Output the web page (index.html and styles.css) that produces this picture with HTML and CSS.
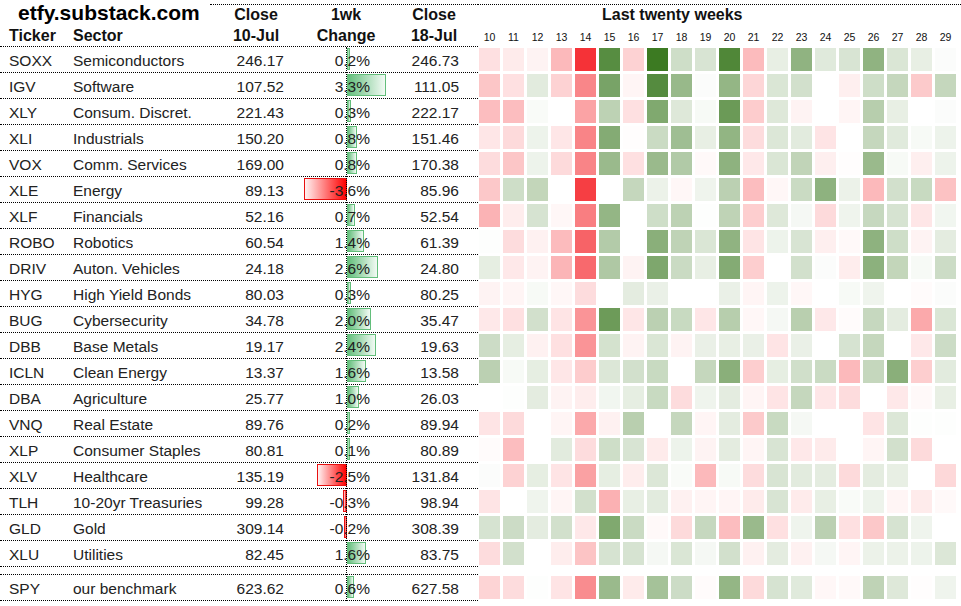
FILE: index.html
```html
<!DOCTYPE html>
<html>
<head>
<meta charset="utf-8">
<title>etfy sector heatmap</title>
<link rel="stylesheet" href="styles.css">
</head>
<body>
<div class="page">
  <div class="left">
    <div class="hdr1">
      <div class="title">etfy.substack.com</div>
      <div class="hdr1-cols">
        <div></div><div class="hc">Close</div><div class="hc">1wk</div><div class="hc">Close</div><div></div>
      </div>
    </div>
    <div class="trow hdr2">
      <div class="c-tk">Ticker</div><div class="c-sec">Sector</div><div class="hc">10-Jul</div><div class="hc">Change</div><div class="hc">18-Jul</div><div></div>
    </div>
    <div id="rows"></div>
    <div class="gap"></div>
    <div id="spy"></div>
    <div class="axis"></div>
  </div>
  <div class="right">
    <div class="hm-title">Last twenty weeks</div>
    <div class="hm-grid hm-labels" id="labels"></div>
    <div id="hm"></div>
    <div class="hm-gap"></div>
    <div id="hmspy"></div>
  </div>
</div>
<script src="script.js"></script>
</body>
</html>
```
FILE: styles.css
```css
body {
  margin: 0;
  background: #fff;
  font-family: "Liberation Sans", Arial, sans-serif;
  color: #222;
}
.page {
  display: flex;
  width: 961px;
  height: 606px;
  overflow: hidden;
}
.left {
  position: relative;
  width: 478px;
  flex: none;
}
.right {
  width: 483px;
  flex: none;
}
.hdr1 {
  display: flex;
  height: 25px;
}
.title {
  width: 210px;
  box-sizing: border-box;
  padding-left: 18px;
  font-weight: bold;
  font-size: 21px;
  line-height: 25px;
  color: #000;
  white-space: nowrap;
}
.hdr1-cols {
  flex: 1;
  margin-top: 4px;
  border-top: 1px dotted #000;
  height: 20px;
  display: grid;
  grid-template-columns: 14px 64px 116px 60px 14px;
  line-height: 20px;
}
.hc {
  text-align: center;
  font-weight: bold;
  font-size: 16px;
  color: #111;
}
.trow {
  display: grid;
  grid-template-columns: 66px 158px 64px 116px 60px 14px;
  height: 26px;
  box-sizing: border-box;
  border-bottom: 1px dotted #000;
  line-height: 25px;
  font-size: 15.5px;
  white-space: nowrap;
}
.trow > div {
  padding-top: 1px;
}
.hdr2 {
  height: 22px;
  line-height: 21px;
}
.hdr2 > div {
  padding-top: 0;
  font-weight: bold;
  font-size: 16px;
  color: #111;
}
.c-tk { padding-left: 9px; }
.c-sec { padding-left: 7px; }
.c-n1 { text-align: right; padding-right: 4px; }
.c-chg { position: relative; text-align: right; padding-right: 34px; }
.c-n2 { text-align: right; padding-right: 5px; }
.gap { height: 7px; }
.spy {
  border-top: 1px dotted #000;
  height: 27px;
}
.axis {
  position: absolute;
  left: 346px;
  top: 47px;
  height: 554px;
  border-left: 1px dotted #000;
  z-index: 3;
}
.bar {
  position: absolute;
  top: 1px;
  height: 22px;
  box-sizing: border-box;
}
.pos {
  left: 59px;
  border: 1px solid #63be7b;
  background: linear-gradient(to right, #63be7b, #f2faf4);
}
.neg {
  right: 57px;
  border: 1px solid #e81010;
  background: linear-gradient(to left, #ff0000, #fff2f2);
}
.val {
  position: relative;
  z-index: 2;
}
.hm-title {
  margin-top: 4px;
  border-top: 1px dotted #000;
  height: 20px;
  line-height: 20px;
  padding-left: 124px;
  font-weight: bold;
  font-size: 16px;
  color: #111;
}
.hm-grid {
  display: grid;
  grid-template-columns: repeat(20, 24px);
  padding-left: 1px;
}
.hm-labels {
  height: 22px;
}
.lbl {
  width: 21px;
  text-align: center;
  font-size: 10.5px;
  line-height: 12px;
  padding-top: 6px;
  color: #111;
}
.hm-row {
  height: 26px;
}
.cell {
  width: 21px;
  height: 23px;
  margin-top: 1px;
}
.hm-gap { height: 8px; }
```
FILE: script.js
```js
const data = [
["SOXX","Semiconductors","246.17","0.2","246.73","-1.5 -1 -0.6 -3.4 -10 8.6 -2.2 10 2.5 2 9 -3.3 1.2 5.7 1.6 2 5.7 1.9 1.2 0.2"],
["IGV","Software","107.52","3.3","111.05","-2.8 -1.5 1.5 -2.2 -5.9 6.9 -0.5 8.7 5.3 0.2 5.5 -2 1.9 2.3 0 -0.8 2.5 3 -2.6 3"],
["XLY","Consum. Discret.","221.43","0.3","222.17","-3.2 -3.2 0.3 0 -4.5 3.4 -1.5 6.5 1.7 0.4 7.6 -2.5 1.7 -0.6 0 -0.5 3.7 1.2 0 0.2"],
["XLI","Industrials","150.20","0.8","151.46","-1.2 -1.8 0.9 -1.2 -6 6.3 -0.1 2.7 4.9 1.2 5.6 -1.7 1.8 1.5 -1.3 0 3 1.6 0.4 0.9"],
["VOX","Comm. Services","169.00","0.8","170.38","-1.7 -2.8 0.9 -1.8 -6 5.2 -1.5 5.2 4 -0.3 5.8 -1.1 1.9 3.2 -0.8 -0.1 5.2 0.4 -0.8 0.9"],
["XLE","Energy","89.13","-3.6","85.96","-2.7 2.5 3.1 0 -9.4 0 3 1 -0.4 0.8 3.5 -3.2 -0.4 2.7 5.8 1 -3.4 2.3 2.8 -3"],
["XLF","Financials","52.16","0.7","52.54","-3.7 -0.9 2.1 -0.4 -6.3 5.5 0 2.5 3.4 0.1 3.3 -2.4 1.7 0.5 -1.8 0.8 2.9 2.1 -1.2 0.7"],
["ROBO","Robotics","60.54","1.4","61.39","0.1 -1.7 -0.7 -3.3 -7.6 3.9 0 6 3.3 1.9 5.7 -1.3 0.9 2 -0.8 -0.3 5.8 2.5 -0.6 1.4"],
["DRIV","Auton. Vehicles","24.18","2.6","24.80","1.3 -1.1 -0.6 -3.6 -7.3 4.1 -0.6 6.6 2.7 1.2 6.3 -2.4 0 2.3 0.2 -0.9 5.9 3.1 0.4 2.6"],
["HYG","High Yield Bonds","80.03","0.3","80.25","-0.6 -0.5 0.4 -0.4 -1.7 0 1.4 1.1 0 0 1.1 -0.5 0.9 -0.4 0 0.4 0.8 0 -0.2 0.2"],
["BUG","Cybersecurity","34.78","2.0","35.47","-1.1 -1.5 2.3 -1.3 -5.2 7.5 -1.2 3.5 2.8 -1.2 3.7 -0.4 0.5 3.6 -1.1 -0.2 2.9 1.4 -4.2 1.9"],
["DBB","Base Metals","19.17","2.4","19.63","2.6 1.3 -0.7 -1.5 -5.2 2.2 -0.6 1.9 -0.6 1.1 1.2 1.1 -1.3 1.1 0 2.1 3 0 -1.1 2.6"],
["ICLN","Clean Energy","13.37","1.6","13.58","3.5 0.4 1.3 -1.2 -2.5 1.8 2.3 2.8 0 3 6 -2.4 1.3 2.4 2.7 -3.4 3 6 -2.4 1.5"],
["DBA","Agriculture","25.77","1.0","26.03","0 0.1 1.4 -0.6 -0.9 0.7 1.3 2.8 -1.7 0.8 1.4 -0.5 -1.3 3 -1.2 -1.7 0 -1.1 -0.3 1.2"],
["VNQ","Real Estate","89.76","0.2","89.94","-1.3 -1.8 0 -0.5 -4.2 -0.7 3.6 0 3 -0.5 1.4 -2.6 2.8 0.5 0 0 -1.3 1.8 0.1 0.1"],
["XLP","Consumer Staples","80.81","0.1","80.89","-0.2 -3.2 0 1.5 -1.7 2.5 2 -1 0.9 -0.6 1.4 -0.5 2 -1.1 -1 0 -0.5 2.3 -1.8 0"],
["XLV","Healthcare","135.19","-2.5","131.84","0.2 -2.2 1.3 -1.3 -4.6 1.3 -0.9 1.8 0.3 -3.4 0.4 -1.7 2 1.5 1.4 -1.8 1.4 1.2 0 -1.9"],
["TLH","10-20yr Treasuries","99.28","-0.3","98.94","-1.3 0 0.8 -0.5 2.3 -3.8 1.2 1.5 -0.7 -0.5 -0.5 -1 2 -1 1.2 0.3 0.9 -0.5 -1 -0.3"],
["GLD","Gold","309.14","-0.2","308.39","2.1 2.6 1.4 2.3 -1.1 6.5 2.7 -0.3 -1.8 2.9 -3.2 5.2 -1.5 0.8 3.5 -1.5 -2.7 2.1 0.8 0"],
["XLU","Utilities","82.45","1.6","83.75","-1.7 2.3 0 -0.9 -2.9 2.1 2.1 0.5 1.9 0.5 2.3 -0.7 1.4 -0.7 0.5 -0.5 1 1 0.9 1.8"]
];
const spy = ["SPY","our benchmark","623.62","0.6","627.58","-2.1 -1.7 0.1 -1.3 -5.6 5.2 -1 4.6 2.6 -0.2 5.5 -1.8 2.1 1.6 -0.4 -0.3 3.3 1.7 -0.1 0.8"];

function color(v) {
  if (v > 0) {
    const t = Math.min(v, 10) / 10;
    return "rgb(" + Math.round(255 - 195 * t) + "," + Math.round(255 - 133 * t) + "," + Math.round(255 - 221 * t) + ")";
  }
  if (v < 0) {
    const t = Math.min(-v, 10) / 10;
    return "rgb(" + Math.round(255 - 10 * t) + "," + Math.round(255 - 205 * t) + "," + Math.round(255 - 200 * t) + ")";
  }
  return "#fff";
}

function rowHtml(r, extra) {
  const c = parseFloat(r[3]);
  const w = Math.max(3, Math.round(Math.abs(c) * 11.9));
  const cls = c < 0 ? "neg" : "pos";
  return '<div class="trow ' + extra + '">' +
    '<div class="c-tk">' + r[0] + '</div>' +
    '<div class="c-sec">' + r[1] + '</div>' +
    '<div class="c-n1">' + r[2] + '</div>' +
    '<div class="c-chg"><span class="bar ' + cls + '" style="width:' + w + 'px"></span><span class="val">' + r[3] + '%</span></div>' +
    '<div class="c-n2">' + r[4] + '</div><div></div></div>';
}

function hmHtml(r) {
  const vals = r[5].split(" ").map(Number);
  return '<div class="hm-grid hm-row">' + vals.map(function (v) {
    return '<div class="cell" style="background:' + color(v) + '"></div>';
  }).join("") + '</div>';
}

document.getElementById("rows").innerHTML = data.map(function (r) { return rowHtml(r, ""); }).join("");
document.getElementById("spy").innerHTML = rowHtml(spy, "spy");
document.getElementById("hm").innerHTML = data.map(hmHtml).join("");
document.getElementById("hmspy").innerHTML = hmHtml(spy);
let lbl = "";
for (let i = 10; i <= 29; i++) lbl += '<div class="lbl">' + i + '</div>';
document.getElementById("labels").innerHTML = lbl;
```
